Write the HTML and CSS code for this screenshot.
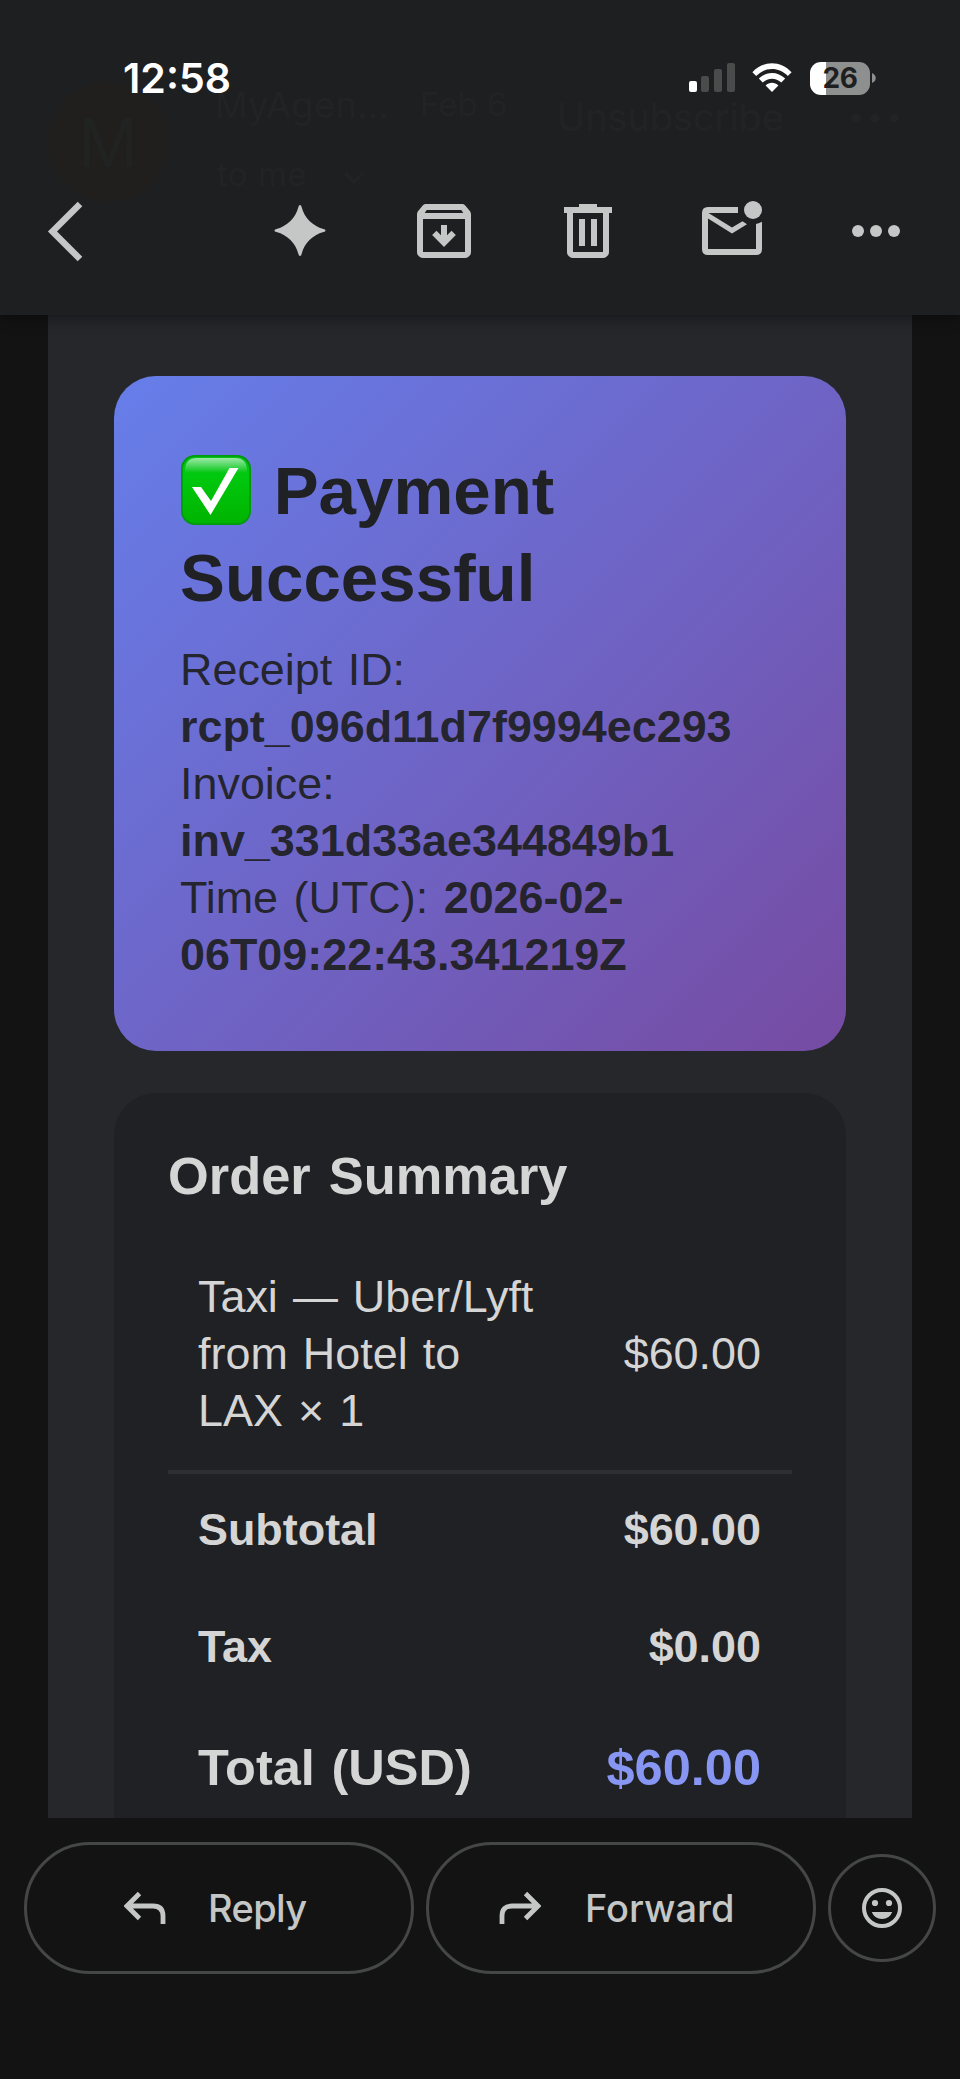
FILE: index.html
```html
<!DOCTYPE html>
<html lang="en">
<head>
<meta charset="utf-8">
<title>Payment receipt</title>
<link rel="stylesheet" href="styles.css">
</head>
<body>
<div class="screen">
  <header class="header">
    <div class="ghost" aria-hidden="true">
      <span class="ghost-avatar">M</span>
      <span class="ghost-name">MyAgen...</span>
      <span class="ghost-date">Feb 6</span>
      <span class="ghost-to">to me</span>
      <svg class="ghost-chevron" viewBox="0 0 22 14"><path d="M2 2l9 9 9-9"/></svg>
      <span class="ghost-unsub">Unsubscribe</span>
      <svg class="ghost-dots" viewBox="0 0 48 10"><circle cx="5" cy="5" r="4.5"/><circle cx="24" cy="5" r="4.5"/><circle cx="43" cy="5" r="4.5"/></svg>
    </div>
    <div class="status">
      <span class="clock">12:58</span>
      <div class="status-icons">
        <svg class="signal" viewBox="0 0 46 30"><rect class="on" x="0" y="18" width="8" height="11" rx="2"/><rect x="12" y="13" width="8" height="16" rx="2"/><rect x="25" y="6" width="8" height="23" rx="2"/><rect x="38" y="0" width="8" height="29" rx="2"/></svg>
        <svg class="wifi" viewBox="0 0 40 30"><path d="M0.4 9.2C11.5-2.8 28.500-2.800 39.600 9.200L35.800 13C27 3.800 13 3.800 4.200 13ZM6.800 15.600C14.300 8 25.700 8 33.200 15.600L29.300 19.500C24 14.400 16 14.400 10.700 19.500ZM13.600 22.400C17.300 19 22.700 19 26.400 22.400L20 29Z"/></svg>
        <div class="battery"><span class="battery-text">26</span></div>
        <svg class="nub" viewBox="0 0 4 10"><path d="M0 0C5 2 5 8 0 10Z"/></svg>
      </div>
    </div>
    <nav class="toolbar">
      <svg class="ic back" viewBox="0 0 72 72"><path d="M33 9L5.500 36.500 33 64" fill="none" stroke-width="6.500"/></svg>
      <svg class="ic spark" viewBox="0 0 72 72"><path class="f" d="M36 10C36.900 10 37.300 10.800 37.600 12C40.500 23 48.500 31 59.500 34C60.800 34.400 61.500 34.800 61.500 35.500S60.800 36.700 59.500 37C48.500 40 40.500 48 37.600 59C37.300 60.300 36.900 61 36 61S34.800 60.300 34.400 59C31.500 48 23.500 40 12.500 37C11.200 36.700 10.500 36.200 10.500 35.500S11.200 34.400 12.500 34C23.500 31 31.500 23 34.400 12C34.800 10.800 35.200 10 36 10Z"/></svg>
      <svg class="ic" viewBox="0 0 24 24"><path class="f" d="M20.540 5.230l-1.390-1.680C18.880 3.210 18.470 3 18 3H6c-.47 0-.88.21-1.160.55L3.460 5.230C3.170 5.570 3 6.020 3 6.500V19c0 1.100.9 2 2 2h14c1.100 0 2-.9 2-2V6.500c0-.48-.17-.93-.46-1.270zM6.240 5h11.520l.6.900.1.100H5.540l.1-.1zM5 19V8h14v11z"/><path class="f" d="M11 10h2v3.400l1.500-1.500 1.450 1.450L12 17.300l-3.950-3.950L9.500 11.900l1.500 1.500z"/></svg>
      <svg class="ic" viewBox="0 0 24 24"><path class="f" d="M15 4V3H9v1H4v2h1v13c0 1.100.9 2 2 2h10c1.100 0 2-.9 2-2V6h1V4zm2 15H7V6h10zM9 8h2v9H9zm4 0h2v9h-2z"/></svg>
      <svg class="ic mail" viewBox="0 0 72 72"><path class="f" d="M12 12H42V18H12.500L36 32.500 46.500 26.200 51 29.200 36 38.500 12 23.500V54H60V29Q63.500 28.300 66 26.800V54Q66 60 60 60H12Q6 60 6 54V18Q6 12 12 12Z"/><circle class="f" cx="57" cy="15" r="9"/></svg>
      <svg class="ic" viewBox="0 0 72 72"><circle class="f" cx="18" cy="36" r="6"/><circle class="f" cx="36" cy="36" r="6"/><circle class="f" cx="54" cy="36" r="6"/></svg>
    </nav>
  </header>

  <main class="mail-body">
    <section class="hero">
      <h1 class="hero-title"><svg class="check" viewBox="0 0 70 70"><defs><linearGradient id="g" x1="0" y1="0" x2="0" y2="1"><stop offset="0" stop-color="#00c41a"/><stop offset=".3" stop-color="#00c80e"/><stop offset="1" stop-color="#00b400"/></linearGradient><linearGradient id="s" x1="0" y1="0" x2="0" y2="1"><stop offset="0" stop-color="#fff" stop-opacity=".62"/><stop offset="1" stop-color="#fff" stop-opacity="0"/></linearGradient></defs><rect width="70" height="70" rx="14" fill="#009a0c"/><rect x="1.800" y="1.800" width="66.400" height="66.400" rx="12.500" fill="url(#g)"/><path d="M4 16Q4 3 16 3H54Q66 3 66 16V18H4Z" fill="url(#s)"/><path d="M11 32H20L30 46 48.500 13H57.500L29.500 60Z" fill="#fff"/></svg> Payment<br>Successful</h1>
      <p class="hero-text">Receipt ID:<br><b>rcpt_096d11d7f9994ec293</b><br>Invoice:<br><b>inv_331d33ae344849b1</b><br>Time (UTC): <b>2026-02-<br>06T09:22:43.341219Z</b></p>
    </section>
    <section class="summary">
      <h2 class="summary-title">Order Summary</h2>
      <div class="row item"><span>Taxi — Uber/Lyft<br>from Hotel to<br>LAX × 1</span><span>$60.00</span></div>
      <div class="row strong subtotal"><span>Subtotal</span><span>$60.00</span></div>
      <div class="row strong"><span>Tax</span><span>$0.00</span></div>
      <div class="row strong total"><span>Total (USD)</span><span class="accent">$60.00</span></div>
    </section>
  </main>

  <footer class="actions">
    <button class="pill reply"><svg class="act" viewBox="0 0 42 34"><path d="M15.500 2.500L3 15 15.500 27.500M3 15H29Q39 15 39 25V33"/></svg><span>Reply</span></button>
    <button class="pill forward"><svg class="act" viewBox="0 0 42 34"><path d="M26.500 2.500L39 15 26.500 27.500M39 15H13Q3 15 3 25V33"/></svg><span>Forward</span></button>
    <button class="emoji"><svg viewBox="0 0 40 40"><circle cx="20" cy="20" r="18" fill="none" stroke="#c4c7c5" stroke-width="4"/><circle class="f" cx="13" cy="15" r="3.100"/><circle class="f" cx="27" cy="15" r="3.100"/><path class="f" d="M9.800 24H30.200Q27.500 31 20 31T9.800 24Z"/></svg></button>
  </footer>
</div>
</body>
</html>
```
FILE: styles.css
```css
* { box-sizing: border-box; }
body { margin: 0; background: #131313; }
.screen {
  width: 960px; height: 2079px; overflow: hidden;
  display: flex; flex-direction: column;
  background: #131313;
  font-family: "Liberation Sans", Arial, sans-serif;
}
.f { fill: #c4c7c5; }

/* Header */
.header {
  position: relative; z-index: 1; flex: none;
  height: 315px; background: #1e1f20;
  box-shadow: 0 3px 14px rgba(0, 0, 0, .42);
}
.ghost { position: absolute; inset: 0; font-family: Inter, sans-serif; color: #222325; white-space: nowrap; line-height: 1; }
.ghost > * { position: absolute; }
.ghost-avatar {
  left: 48px; top: 82px; width: 120px; height: 120px; border-radius: 50%;
  display: flex; align-items: center; justify-content: center;
  background: #211f1d; color: #202322; font-size: 67px;
}
.ghost-name { left: 215px; top: 87px; font-size: 36px; letter-spacing: .4px; }
.ghost-date { left: 420px; top: 88px; font-size: 33px; }
.ghost-to { left: 217px; top: 158px; font-size: 33px; letter-spacing: .5px; }
.ghost-chevron { left: 343px; top: 171px; width: 22px; height: 14px; fill: none; stroke: #222325; stroke-width: 3; }
.ghost-unsub { left: 557px; top: 98px; font-size: 38px; letter-spacing: -.1px; }
.ghost-dots { left: 851px; top: 113px; width: 48px; height: 10px; fill: #222325; }

.status {
  position: relative; height: 156px;
  display: flex; justify-content: space-between; align-items: center;
  padding: 0 84px 0 123px;
}
.clock { font: 600 41px/1 Inter, sans-serif; color: #fff; letter-spacing: 0; }
.status-icons { display: flex; align-items: center; }
.signal { width: 46px; height: 30px; margin-right: 17px; fill: #4a4b4b; }
.signal .on { fill: #fff; }
.wifi { width: 40px; height: 30px; margin-right: 18px; fill: #fff; }
.battery {
  width: 60px; height: 33px; border-radius: 11px;
  background: linear-gradient(to right, #fff 16px, #8e8f8f 16px);
  display: flex; align-items: center; justify-content: center;
}
.battery-text { font: 700 28px/1 Inter, sans-serif; color: #1e1f20; letter-spacing: -.5px; }
.nub { width: 4px; height: 10px; margin-left: 2px; fill: #8e8f8f; }

.toolbar {
  position: relative;
  display: grid; grid-template-columns: 215px 145px 144px 144px 144px 72px;
  padding: 39px 0 0 48px;
}
.ic { width: 72px; height: 72px; display: block; }
.back { margin-left: -1px; stroke: #c4c7c5; }
.spark { margin-left: .5px; }

/* Message */
.mail-body {
  flex: none; height: 1503px; margin: 0 48px; padding: 61px 66px 0;
  background: #26272b; overflow: hidden;
  display: flex; flex-direction: column; gap: 42px;
}
.hero {
  flex: none; height: 675px; border-radius: 42px; padding: 71px 66px 0;
  background: linear-gradient(135deg, #667eea 0%, #764ba2 100%);
  color: #202124;
}
.hero-title { margin: 0; font-size: 67.300px; line-height: 87px; font-weight: 700; word-spacing: 4px; white-space: nowrap; }
.check { width: 70px; height: 70px; vertical-align: -11px; margin: 0 0 0 1px; }
.hero-text { margin: 20px 0 0; font-size: 44.900px; line-height: 57px; word-spacing: 3px; color: rgba(32, 33, 36, .94); white-space: nowrap; }
.summary {
  flex: none; height: 840px; border-radius: 42px 42px 0 0; padding: 49px 54px 0;
  background: #202124; color: #d5d5d5;
}
.summary-title { margin: 0; font-size: 52.400px; line-height: 68px; word-spacing: 3.500px; }
.row { display: flex; justify-content: space-between; align-items: center; padding: 30px 31px 30px 30px; font-size: 44.900px; line-height: 57px; word-spacing: 2.600px; }
.item { margin-top: 28px; padding-bottom: 31px; border-bottom: 4px solid #2e2f31; }
.strong { font-weight: 700; }
.subtotal { padding-top: 27px; }
.total { padding-top: 31px; font-size: 50.500px; line-height: 64px; }
.accent { color: #8796f2; }

/* Actions */
.actions { display: flex; align-items: center; gap: 12px; padding: 24px 24px 0; }
.pill, .emoji { border: 3px solid #444746; background: none; color: #c4c7c5; display: flex; align-items: center; }
.pill { width: 390px; height: 132px; border-radius: 66px; font: 500 38px/1 Inter, sans-serif; gap: 42px; }
.reply { padding: 0 0 0 97px; letter-spacing: -.6px; }
.forward { padding: 0 0 0 70px; gap: 44px; }
.act { width: 42px; height: 34px; fill: none; stroke: #c4c7c5; stroke-width: 4.800; }
.emoji { width: 108px; height: 108px; border-radius: 50%; justify-content: center; padding: 0; }
.emoji svg { width: 40px; height: 40px; }
```
